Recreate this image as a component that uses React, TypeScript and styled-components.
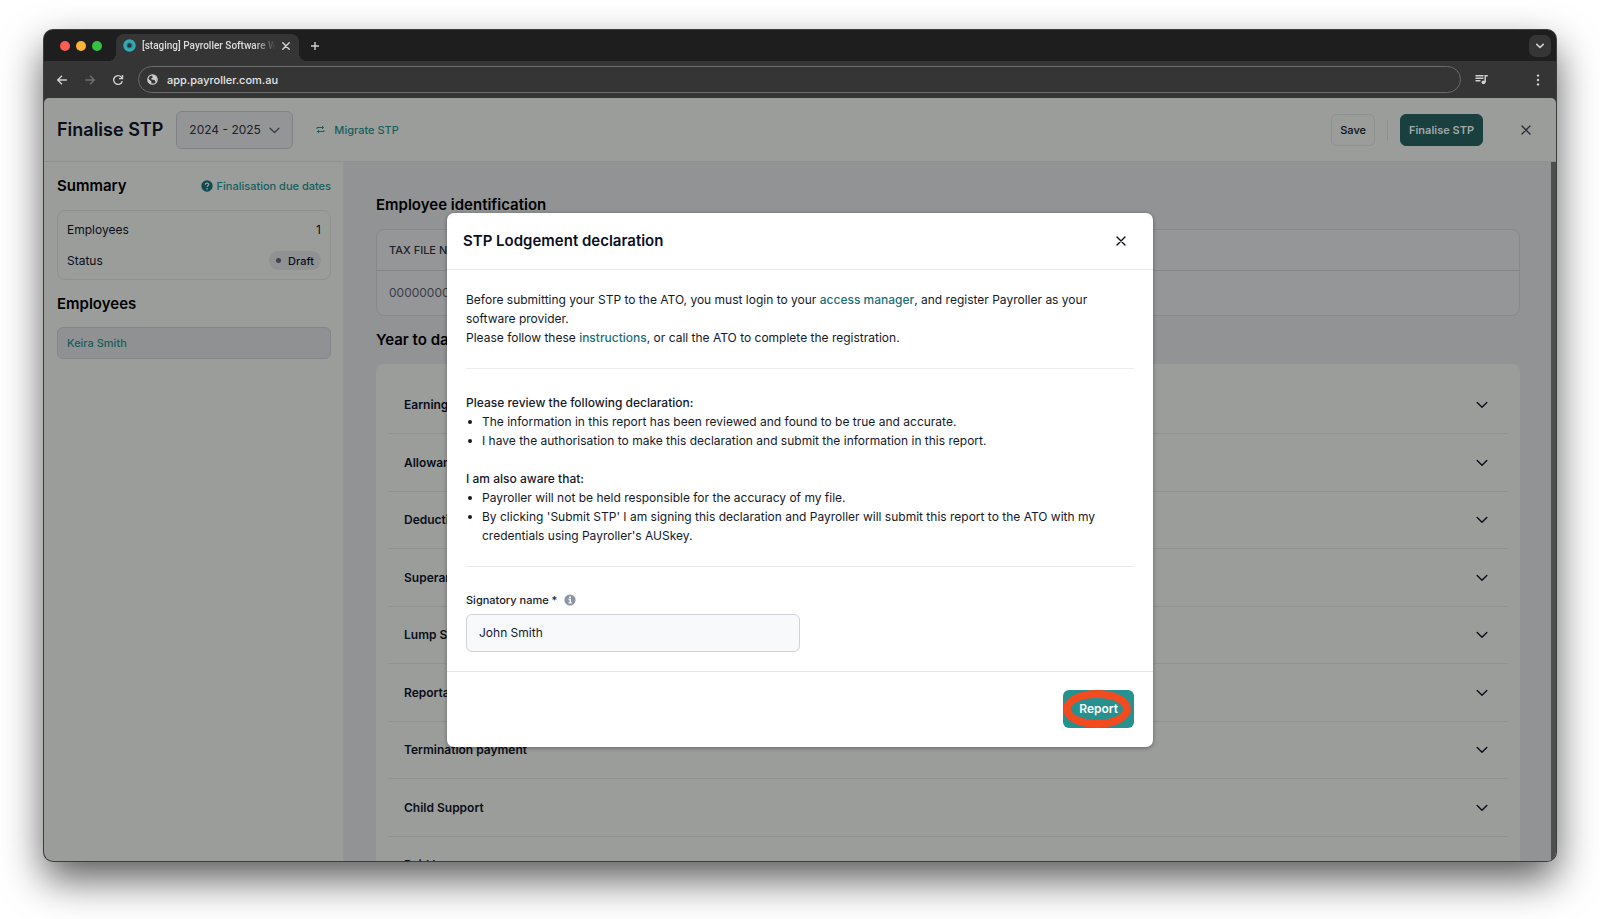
import React from 'react';
import styled, { createGlobalStyle, css } from 'styled-components';

const GlobalStyle = createGlobalStyle`
  *, *::before, *::after { box-sizing: border-box; }
  body { margin: 0; background: #fff; }
  body, button, input, select { font-family: Inter, "Liberation Sans", sans-serif; }
  h1, h2, p, ul { margin: 0; padding: 0; }
  button { cursor: pointer; }
  svg { display: block; flex: none; }
`;

const color = {
  surface: '#9b9d9b',
  canvas: '#929395',
  line: '#8f9190',
  ink: '#0a0e1a',
  muted: '#3a3e48',
  teal: '#165f5c',
  chrome: '#353535',
};

/* Browser window */

const Desktop = styled.div`
  height: 100vh;
  min-height: 700px;
  padding: 30px 44px 58px;
`;

const BrowserWindow = styled.div`
  display: flex;
  flex-direction: column;
  height: 100%;
  overflow: hidden;
  border-radius: 9px;
  background: ${color.chrome};
  box-shadow: 0 0 0 1px #3c3d3d, 0 18px 40px rgba(0, 0, 0, 0.65);
`;

const TabStrip = styled.div`
  display: flex;
  align-items: center;
  height: 31px;
  flex: none;
  padding: 0 5px 0 16px;
  background: #1e1e1e;
`;

const TrafficLights = styled.div`
  display: flex;
  gap: 6px;
  margin-right: 14px;
`;

const Light = styled.span<{ $fill: string }>`
  width: 10px;
  height: 10px;
  border-radius: 50%;
  background: ${(p) => p.$fill};
`;

const Tab = styled.div`
  position: relative;
  display: flex;
  align-items: center;
  align-self: flex-end;
  width: 183px;
  height: 27px;
  margin-right: 5px;
  padding: 0 4px 4px 7px;
  border-radius: 8px 8px 0 0;
  background: ${color.chrome};

  &::before,
  &::after {
    content: '';
    position: absolute;
    bottom: 0;
    width: 8px;
    height: 8px;
  }
  &::before {
    right: 100%;
    background: radial-gradient(circle at 0 0, transparent 8px, ${color.chrome} 8px);
  }
  &::after {
    left: 100%;
    background: radial-gradient(circle at 100% 0, transparent 8px, ${color.chrome} 8px);
  }
`;

const TabTitle = styled.span`
  flex: 1;
  min-width: 0;
  margin-left: 6px;
  overflow: hidden;
  white-space: nowrap;
  font-family: Roboto, Inter, sans-serif;
  font-size: 10px;
  font-weight: 500;
  line-height: 14px;
  color: #dcdcdc;
  mask-image: linear-gradient(90deg, #000 112px, transparent 134px);
`;

const ChromeButton = styled.button<{ $filled?: boolean; $dim?: boolean; $narrow?: boolean }>`
  display: grid;
  place-items: center;
  width: ${(p) => (p.$narrow ? '18px' : '22px')};
  height: 22px;
  flex: none;
  padding: 0;
  border: 0;
  border-radius: 7px;
  background: ${(p) => (p.$filled ? '#353535' : 'transparent')};
  color: ${(p) => (p.$dim ? '#6f6f6f' : '#d0d0d0')};
`;

const Spacer = styled.div`
  flex: 1;
`;

const Toolbar = styled.div`
  display: flex;
  align-items: center;
  height: 37px;
  flex: none;
  padding: 0 7px;
  background: ${color.chrome};
`;

const NavButtons = styled.div`
  display: flex;
  gap: 6px;
  margin-right: 9px;
`;

const AddressBar = styled.label`
  display: flex;
  align-items: center;
  flex: 1;
  height: 27px;
  margin-right: 9px;
  padding: 0 8px;
  gap: 9px;
  border: 1px solid #6b6b6b;
  border-radius: 14px;
  color: #cfcfcf;
`;

const AddressInput = styled.input`
  flex: 1;
  min-width: 0;
  padding: 0;
  border: 0;
  outline: 0;
  background: transparent;
  color: #e4e4e4;
  font-size: 11px;
  font-weight: 500;
  line-height: 16px;
`;

const ToolbarEnd = styled.div`
  display: flex;
  gap: 35px;
`;

/* Application */

const AppFrame = styled.div`
  position: relative;
  display: flex;
  flex-direction: column;
  flex: 1;
  min-height: 0;
  border-radius: 5px 5px 0 0;
  overflow: hidden;
  background: ${color.surface};
  color: ${color.ink};
`;

const AppHeader = styled.header`
  display: flex;
  align-items: center;
  height: 64px;
  flex: none;
  padding: 0 18px 0 13px;
  border-bottom: 1px solid ${color.line};
`;

const PageTitle = styled.h1`
  font-size: 18px;
  font-weight: 600;
  line-height: 24px;
  white-space: nowrap;
`;

const YearPicker = styled.div`
  position: relative;
  width: 117px;
  margin-left: 13px;
  color: ${color.muted};

  svg {
    position: absolute;
    top: 14px;
    right: 13px;
    pointer-events: none;
  }
`;

const YearSelect = styled.select`
  display: block;
  appearance: none;
  width: 100%;
  height: 38px;
  padding: 0 12px;
  border: 1px solid #808285;
  border-radius: 6px;
  background: #949597;
  color: #1b1f2a;
  font-size: 12px;
  line-height: 19px;
`;

const MigrateLink = styled.a`
  display: flex;
  align-items: center;
  gap: 9px;
  margin-left: 23px;
  color: ${color.teal};
  font-size: 11px;
  font-weight: 500;
  line-height: 16px;
  text-decoration: none;
`;

const HeaderButton = styled.button<{ $primary?: boolean }>`
  height: 32px;
  padding: 0 8px;
  border: 1px solid ${color.line};
  border-radius: 6px;
  background: transparent;
  color: ${color.ink};
  font-size: 11px;
  font-weight: 500;
  line-height: 16px;
  white-space: nowrap;
  ${(p) =>
    p.$primary &&
    css`
      border-color: #1a3f3f;
      background: #1a3f3f;
      color: #9fa8a6;
      font-weight: 600;
    `}
`;

const HeaderDivider = styled.span`
  width: 1px;
  height: 20px;
  margin: 0 12px;
  background: #8d8f8e;
`;

const CloseButton = styled.button<{ $tone?: string }>`
  display: grid;
  place-items: center;
  width: 24px;
  height: 24px;
  padding: 0;
  border: 0;
  background: transparent;
  color: ${(p) => p.$tone ?? '#0a0e1a'};
`;

const HeaderClose = styled.div`
  margin-left: 31px;
`;

const Content = styled.div`
  display: flex;
  flex: 1;
  min-height: 0;
`;

const Sidebar = styled.aside`
  width: 300px;
  flex: none;
  padding: 12px 12px 12px 13px;
  border-right: 1px solid #949694;
`;

const SectionTitle = styled.h2`
  font-size: 15px;
  font-weight: 600;
  line-height: 24px;
  color: #000;
  white-space: nowrap;
`;

const SummaryHead = styled.div`
  display: flex;
  align-items: center;
  justify-content: space-between;
`;

const HelpLink = styled.a`
  display: flex;
  align-items: center;
  gap: 4px;
  color: ${color.teal};
  font-size: 11px;
  font-weight: 500;
  line-height: 16px;
  text-decoration: none;
`;

const SummaryCard = styled.div`
  margin: 12px 0;
  padding: 3px 9px;
  border: 1px solid ${color.line};
  border-radius: 8px;
`;

const SummaryRow = styled.div`
  display: flex;
  align-items: center;
  justify-content: space-between;
  height: 31px;
  font-size: 12px;
  line-height: 18px;
`;

const Badge = styled.span`
  display: flex;
  align-items: center;
  gap: 7px;
  height: 19px;
  padding: 0 7px;
  border-radius: 10px;
  background: #909193;
  font-size: 11px;
  font-weight: 500;

  &::before {
    content: '';
    width: 5px;
    height: 5px;
    border-radius: 50%;
    background: #3f434d;
  }
`;

const EmployeeButton = styled.button`
  display: block;
  width: 100%;
  height: 32px;
  margin-top: 11px;
  padding: 0 9px;
  border: 1px solid #858689;
  border-radius: 6px;
  background: #909193;
  color: ${color.teal};
  font-size: 11px;
  font-weight: 500;
  text-align: left;
`;

const Main = styled.main`
  flex: 1;
  min-width: 0;
  overflow: hidden;
  padding: 31px 31px 0 32px;
  background: ${color.canvas};
`;

const ScrollTrack = styled.div`
  width: 5px;
  flex: none;
  background: #4d4f4e;
`;

const TableCard = styled.div`
  margin: 12px 0;
  border: 1px solid #88898b;
  border-radius: 8px;
  background: #959698;
  overflow: hidden;
`;

const Table = styled.table`
  width: 100%;
  border-collapse: collapse;

  th,
  td {
    padding: 0 12px;
    text-align: left;
    line-height: 18px;
  }
  th {
    height: 40px;
    border-bottom: 1px solid #848587;
    font-size: 11px;
    font-weight: 500;
    color: #1b1f2a;
  }
  td {
    height: 45px;
    font-size: 12px;
    color: ${color.muted};
  }
`;

const AccordionCard = styled.div`
  display: grid;
  grid-auto-rows: 57px 58px;
  margin-top: 12px;
  padding: 13px 12px;
  border-radius: 8px;
  background: ${color.surface};
`;

const AccordionRow = styled.button`
  display: flex;
  align-items: center;
  justify-content: space-between;
  padding: 0 20px 0 16px;
  border: 0;
  border-bottom: 1px solid #909291;
  background: transparent;
  color: ${color.ink};
  font-size: 12px;
  font-weight: 600;
  line-height: 18px;
`;

/* Dialog */

const DialogLayer = styled.div`
  position: absolute;
  inset: 0;
  display: grid;
  place-items: center;
`;

const Dialog = styled.section`
  width: 706px;
  max-width: 100%;
  border-radius: 7px;
  background: #fff;
  box-shadow: 0 1px 4px rgba(0, 0, 0, 0.35);
  color: #14192a;
  font-size: 12px;
  line-height: 19px;
`;

const DialogHeader = styled.div`
  display: flex;
  align-items: center;
  justify-content: space-between;
  height: 57px;
  padding: 0 20px 0 16px;
  border-bottom: 1px solid #e5e7e9;
`;

const DialogTitle = styled.h2`
  font-size: 15px;
  font-weight: 600;
  line-height: 24px;
  color: #0a0f1f;
`;

const DialogBody = styled.div`
  padding: 20px 19px 19px;
`;

const DialogSection = styled.div`
  margin-bottom: 24px;
  padding-bottom: 21px;
  border-bottom: 1px solid #ebecee;
`;

const Lead = styled.p`
  font-weight: 500;
`;

const TextLink = styled.a`
  color: #1c7078;
  font-weight: 500;
  text-decoration: none;
`;

const Bullets = styled.ul<{ $spaced?: boolean }>`
  padding-left: 16px;
  margin-bottom: ${(p) => (p.$spaced ? '19px' : '0')};
  list-style: none;

  li {
    position: relative;
  }
  li::before {
    content: '';
    position: absolute;
    left: -14px;
    top: 8px;
    width: 4px;
    height: 4px;
    border-radius: 50%;
    background: #14192a;
  }
`;

const FieldLabel = styled.label`
  display: flex;
  align-items: center;
  gap: 7px;
  margin-bottom: 5px;
  font-size: 11px;
  font-weight: 500;
  line-height: 18px;
`;

const TextField = styled.input`
  display: block;
  width: 50%;
  height: 38px;
  padding: 0 12px;
  border: 1px solid #cfd2d8;
  border-radius: 6px;
  background: #f8f9fb;
  color: #14192a;
  font-size: 12px;
  line-height: 19px;
`;

const DialogFooter = styled.div`
  display: flex;
  justify-content: flex-end;
  padding: 18px 19px 19px;
  border-top: 1px solid #e2e4e7;
`;

const ReportButton = styled.button`
  position: relative;
  height: 38px;
  padding: 0 16px;
  border: 0;
  border-radius: 6px;
  background: #26918f;
  color: #fff;
  font-size: 12px;
  font-weight: 600;
  line-height: 18px;
`;

const Highlight = styled.span`
  position: absolute;
  inset: 0 3px 0 0;
  border: 8px solid #f24b20;
  border-radius: 50%;
  pointer-events: none;
`;

/* Icons */

const Chevron = ({ size = 12, stroke = 1.4 }: { size?: number; stroke?: number }) => (
  <svg width={size} height={size} viewBox="0 0 12 12" fill="none" stroke="currentColor" strokeWidth={stroke} strokeLinecap="round" strokeLinejoin="round">
    <path d="M1.2 3.6 6 8.3l4.8-4.7" />
  </svg>
);

const Cross = ({ size = 10, stroke = 1.4 }: { size?: number; stroke?: number }) => (
  <svg width={size} height={size} viewBox="0 0 10 10" fill="none" stroke="currentColor" strokeWidth={stroke} strokeLinecap="round">
    <path d="M1 1l8 8M9 1 1 9" />
  </svg>
);

const Favicon = () => (
  <svg width="13" height="13" viewBox="0 0 13 13">
    <circle cx="6.5" cy="6.5" r="6.2" fill="#36a9ae" />
    <circle cx="6.5" cy="6.5" r="3" fill="#1f7f88" />
    <circle cx="6.5" cy="6.5" r="1.9" fill="#23393f" />
  </svg>
);

const PlusIcon = () => (
  <svg width="10" height="10" viewBox="0 0 10 10" stroke="currentColor" strokeWidth="1.4">
    <path d="M5 1v8M1 5h8" />
  </svg>
);

const Arrow = ({ back }: { back?: boolean }) => (
  <svg width="12" height="12" viewBox="0 0 12 12" fill="none" stroke="currentColor" strokeWidth="1.4">
    <path d={back ? 'M10.8 6H1.9M6 1.7 1.7 6 6 10.3' : 'M1.2 6h8.9M6 1.7 10.3 6 6 10.3'} />
  </svg>
);

const Reload = () => (
  <svg width="12" height="12" viewBox="0 0 12 12" fill="none" stroke="currentColor" strokeWidth="1.4">
    <path d="M10.3 7.2A4.4 4.4 0 1 1 9.4 3.1L10.4 4.2" />
    <path d="M10.5 1v3.6H6.9" />
  </svg>
);

const Globe = () => (
  <svg width="11" height="11" viewBox="0 0 11 11">
    <circle cx="5.5" cy="5.5" r="4.7" fill="none" stroke="currentColor" strokeWidth="1.2" />
    <path d="M1 4.4 4.4 7.6v2.6L2 9 .8 6.4zM5 .8 8 1.5 9.8 4.2 9.6 7.2 8.2 7.8 7.6 6 4.6 5.6 4.2 4.2 5.8 3.6z" fill="currentColor" />
  </svg>
);

const MediaIcon = () => (
  <svg width="13" height="11" viewBox="0 0 13 11" fill="none" stroke="currentColor" strokeWidth="1.5">
    <path d="M.5 1.7h8M.5 4.2h8M.5 6.7h5M10.2 8.2V1.7h2.6" />
    <circle cx="8.5" cy="8.3" r="1.9" fill="currentColor" stroke="none" />
  </svg>
);

const Dots = () => (
  <svg width="4" height="12" viewBox="0 0 4 12" fill="currentColor">
    <circle cx="2" cy="1.6" r="1.2" />
    <circle cx="2" cy="6" r="1.2" />
    <circle cx="2" cy="10.4" r="1.2" />
  </svg>
);

const Swap = () => (
  <svg width="9" height="9" viewBox="0 0 9 9" fill="none" stroke="currentColor" strokeWidth="1">
    <path d="M1 4V2.5h6.5M6 1l1.6 1.5L6 4M8 5v1.5H1.5M3 5 1.4 6.5 3 8" />
  </svg>
);

const Help = () => (
  <svg width="12" height="12" viewBox="0 0 12 12" fill="none">
    <circle cx="6" cy="6" r="5.7" fill="#0e4a50" />
    <path d="M4.3 4.7c0-2 3.4-2 3.4-.1C7.7 5.8 6 5.8 6 7.1" stroke="#9b9d9b" strokeWidth="1.2" />
    <circle cx="6" cy="8.9" r=".8" fill="#9b9d9b" />
  </svg>
);

const Info = () => (
  <svg width="12" height="12" viewBox="0 0 12 12" fill="none">
    <circle cx="6" cy="6" r="5.6" fill="#8d95a3" />
    <circle cx="6" cy="3.2" r="1" fill="#fff" />
    <path d="M4.6 5.5H6.3V8.6M4.5 8.8h3.2" stroke="#fff" strokeWidth="1.3" />
  </svg>
);

const sections = [
  'Earnings',
  'Allowances',
  'Deductions',
  'Superannuation',
  'Lump Sum',
  'Reportable fringe benefits',
  'Termination payment',
  'Child Support',
  'Paid leave',
];

export default function App() {
  return (
    <>
      <GlobalStyle />
      <Desktop>
        <BrowserWindow>
          <TabStrip>
            <TrafficLights>
              <Light $fill="#fb5d54" />
              <Light $fill="#fbb43a" />
              <Light $fill="#35c242" />
            </TrafficLights>
            <Tab>
              <Favicon />
              <TabTitle>[staging] Payroller Software W</TabTitle>
              <ChromeButton $narrow aria-label="Close tab">
                <Cross size={8} stroke={1.8} />
              </ChromeButton>
            </Tab>
            <ChromeButton aria-label="New tab">
              <PlusIcon />
            </ChromeButton>
            <Spacer />
            <ChromeButton $filled aria-label="Search tabs">
              <Chevron size={8} stroke={2.4} />
            </ChromeButton>
          </TabStrip>
          <Toolbar>
            <NavButtons>
              <ChromeButton aria-label="Back">
                <Arrow back />
              </ChromeButton>
              <ChromeButton $dim aria-label="Forward">
                <Arrow />
              </ChromeButton>
              <ChromeButton aria-label="Reload">
                <Reload />
              </ChromeButton>
            </NavButtons>
            <AddressBar>
              <Globe />
              <AddressInput aria-label="Address" defaultValue="app.payroller.com.au" />
            </AddressBar>
            <ToolbarEnd>
              <ChromeButton aria-label="Media controls">
                <MediaIcon />
              </ChromeButton>
              <ChromeButton aria-label="Browser menu">
                <Dots />
              </ChromeButton>
            </ToolbarEnd>
          </Toolbar>

          <AppFrame>
            <AppHeader>
              <PageTitle>Finalise STP</PageTitle>
              <YearPicker>
                <YearSelect aria-label="Financial year" defaultValue="2024 - 2025">
                  <option>2024 - 2025</option>
                </YearSelect>
                <Chevron size={11} stroke={1.5} />
              </YearPicker>
              <MigrateLink href="#migrate">
                <Swap />
                Migrate STP
              </MigrateLink>
              <Spacer />
              <HeaderButton>Save</HeaderButton>
              <HeaderDivider />
              <HeaderButton $primary>Finalise STP</HeaderButton>
              <HeaderClose>
                <CloseButton $tone="#2b2f39" aria-label="Close page">
                  <Cross />
                </CloseButton>
              </HeaderClose>
            </AppHeader>

            <Content>
              <Sidebar>
                <SummaryHead>
                  <SectionTitle>Summary</SectionTitle>
                  <HelpLink href="#due-dates">
                    <Help />
                    Finalisation due dates
                  </HelpLink>
                </SummaryHead>
                <SummaryCard>
                  <SummaryRow>
                    <span>Employees</span>
                    <span>1</span>
                  </SummaryRow>
                  <SummaryRow>
                    <span>Status</span>
                    <Badge>Draft</Badge>
                  </SummaryRow>
                </SummaryCard>
                <SectionTitle>Employees</SectionTitle>
                <EmployeeButton>Keira Smith</EmployeeButton>
              </Sidebar>

              <Main>
                <SectionTitle>Employee identification</SectionTitle>
                <TableCard>
                  <Table>
                    <thead>
                      <tr>
                        <th>TAX FILE NUMBER</th>
                      </tr>
                    </thead>
                    <tbody>
                      <tr>
                        <td>000000000</td>
                      </tr>
                    </tbody>
                  </Table>
                </TableCard>
                <SectionTitle>Year to date</SectionTitle>
                <AccordionCard>
                  {sections.map((name) => (
                    <AccordionRow key={name}>
                      {name}
                      <Chevron />
                    </AccordionRow>
                  ))}
                </AccordionCard>
              </Main>
              <ScrollTrack />
            </Content>

            <DialogLayer>
              <Dialog role="dialog" aria-modal="true" aria-labelledby="dialog-title">
                <DialogHeader>
                  <DialogTitle id="dialog-title">STP Lodgement declaration</DialogTitle>
                  <CloseButton aria-label="Close dialog">
                    <Cross />
                  </CloseButton>
                </DialogHeader>
                <DialogBody>
                  <DialogSection>
                    <p>
                      Before submitting your STP to the ATO, you must login to your{' '}
                      <TextLink href="#access-manager">access manager</TextLink>, and register Payroller as your
                      software provider.
                    </p>
                    <p>
                      Please follow these <TextLink href="#instructions">instructions</TextLink>, or call the ATO to
                      complete the registration.
                    </p>
                  </DialogSection>
                  <DialogSection>
                    <Lead>Please review the following declaration:</Lead>
                    <Bullets $spaced>
                      <li>The information in this report has been reviewed and found to be true and accurate.</li>
                      <li>I have the authorisation to make this declaration and submit the information in this report.</li>
                    </Bullets>
                    <Lead>I am also aware that:</Lead>
                    <Bullets>
                      <li>Payroller will not be held responsible for the accuracy of my file.</li>
                      <li>
                        By clicking 'Submit STP' I am signing this declaration and Payroller will submit this report to
                        the ATO with my credentials using Payroller's AUSkey.
                      </li>
                    </Bullets>
                  </DialogSection>
                  <FieldLabel htmlFor="signatory">
                    Signatory name *
                    <Info />
                  </FieldLabel>
                  <TextField id="signatory" defaultValue="John Smith" />
                </DialogBody>
                <DialogFooter>
                  <ReportButton>
                    Report
                    <Highlight />
                  </ReportButton>
                </DialogFooter>
              </Dialog>
            </DialogLayer>
          </AppFrame>
        </BrowserWindow>
      </Desktop>
    </>
  );
}
